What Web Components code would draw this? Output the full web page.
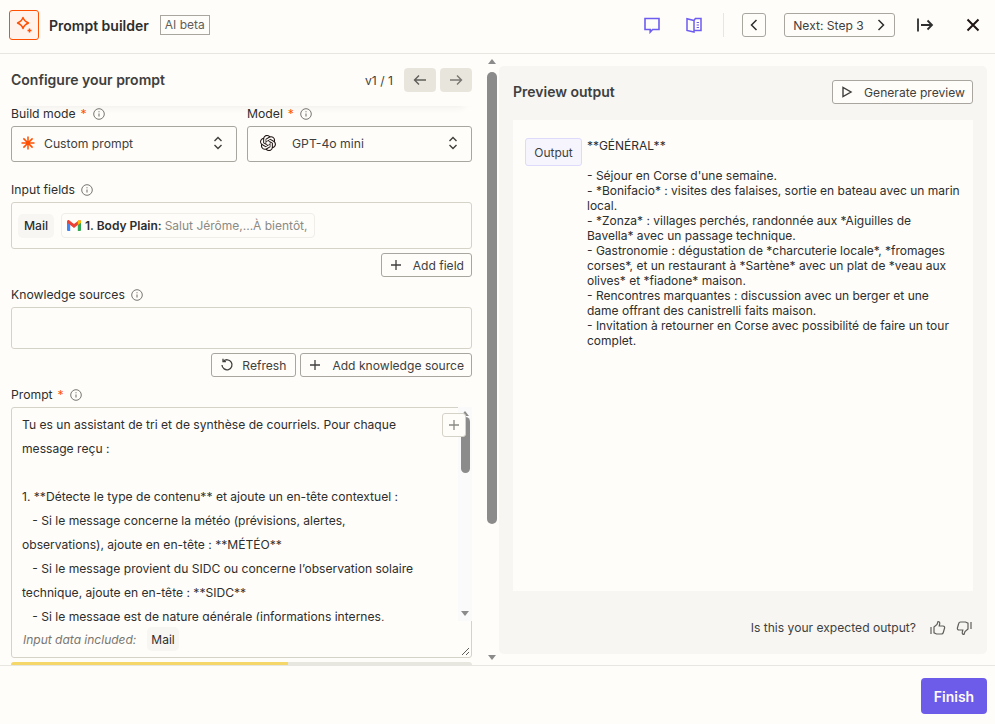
<!DOCTYPE html>
<html lang="en">
<head>
<meta charset="utf-8">
<title>Prompt builder</title>
<style>
  html, body { margin: 0; height: 100%; }
  body { background: #fffdf9; color: #2d2e2e; font-family: Inter, "Liberation Sans", sans-serif; font-size: 13px; overflow: hidden; }
</style>
</head>
<body>
<pb-app></pb-app>
<script>
const icons = {
  chat: `<svg width="18" height="18" viewBox="0 0 18 18" fill="none" stroke="#6d5cf0" stroke-width="1.6"><path d="M2 2.5h14v11H9.6l-2.4 2.6v-2.6H2z"/></svg>`,
  book: `<svg width="18" height="18" viewBox="0 0 18 18" fill="none" stroke="#6d5cf0" stroke-width="1.5"><path d="M9 4.500 2 2.800v11.600L9 16zM9 4.500l1.400-2H16v12H9"/><path d="M11.600 6.500h2.400M11.600 9h2.400M11.600 11.500h2.400" stroke-width="1.200"/></svg>`,
  left: `<svg width="12" height="14" viewBox="0 0 12 14" fill="none" stroke="#2d2e2e" stroke-width="1.5"><path d="M8.500 2 3.500 7l5 5"/></svg>`,
  right: `<svg width="12" height="14" viewBox="0 0 12 14" fill="none" stroke="#2d2e2e" stroke-width="1.5"><path d="M3.500 2l5 5-5 5"/></svg>`,
  exit: `<svg width="18" height="16" viewBox="0 0 18 16" fill="none" stroke="#2d2e2e" stroke-width="1.8"><path d="M2 1.500v13M5 8h11M11.500 3.500 16 8l-4.500 4.500"/></svg>`,
  close: `<svg width="14" height="14" viewBox="0 0 14 14" fill="none" stroke="#201515" stroke-width="2"><path d="M1.500 1.500l11 11M12.500 1.500l-11 11"/></svg>`,
  plus: `<svg width="12" height="12" viewBox="0 0 12 12" fill="none" stroke="#403f3e" stroke-width="1.300"><path d="M6 1v10M1 6h10"/></svg>`,
  play: `<svg width="12" height="12" viewBox="0 0 12 12" fill="none" stroke="#403f3e" stroke-width="1.400"><path d="M2 1.500v9l8-4.500z"/></svg>`,
  refresh: `<svg width="14" height="14" viewBox="0 0 14 14" fill="none" stroke="#403f3e" stroke-width="1.300" style="margin-right:-3px"><path d="M3.300 3.400A5 5 0 1 1 2 7"/><path d="M3 .8v2.900h2.900"/></svg>`,
  arrowLeft: `<svg width="14" height="12" viewBox="0 0 14 12" fill="none" stroke="#5f5e5a" stroke-width="1.400"><path d="M13 6H1.500M6 1.500 1.500 6 6 10.500"/></svg>`,
  arrowRight: `<svg width="14" height="12" viewBox="0 0 14 12" fill="none" stroke="#787671" stroke-width="1.400"><path d="M1 6h11.500M8 1.500 12.500 6 8 10.500"/></svg>`,
  updown: `<svg width="10" height="14" viewBox="0 0 10 14" fill="none" stroke="#403f3e" stroke-width="1.400"><path d="M1.500 5 5 1.500 8.500 5M1.500 9 5 12.500 8.500 9"/></svg>`,
  info: `<svg width="12" height="12" viewBox="0 0 12 12" fill="none" stroke="#787671" stroke-width="1"><circle cx="6" cy="6" r="5.300"/><path d="M6 5.500v3" stroke-width="1.100"/><path d="M6 3.200v1" stroke-width="1.100"/></svg>`,
  logo: `<svg width="18" height="18" viewBox="0 0 18 18" fill="none" stroke="#ff4f00" stroke-width="1.400"><path d="M8 1.500c.8 2.600 2.400 4.200 5.500 5.500-3.100 1.300-4.700 2.900-5.500 5.500C7.200 9.900 5.600 8.300 2.500 7 5.600 5.700 7.200 4.100 8 1.500z" stroke-linejoin="round"/><path d="M14.500 12.500v4M12.500 14.500h4" stroke-width="1.500"/></svg>`,
  star: `<svg width="14" height="14" viewBox="0 0 14 14" fill="none" stroke="#ff4f00" stroke-width="1.500"><path d="M7 .5v13M.5 7h13M2.400 2.400l9.200 9.200M11.600 2.400l-9.200 9.200"/></svg>`,
  openai: `<svg width="16" height="16" viewBox="0 0 24 24" fill="#201515"><path d="M22.2819 9.8211a5.9847 5.9847 0 0 0-.5157-4.9108 6.0462 6.0462 0 0 0-6.5098-2.9A6.0651 6.0651 0 0 0 4.9807 4.1818a5.9847 5.9847 0 0 0-3.9977 2.9 6.0462 6.0462 0 0 0 .7427 7.0966 5.98 5.98 0 0 0 .511 4.9107 6.051 6.051 0 0 0 6.5146 2.9001A5.9847 5.9847 0 0 0 13.2599 24a6.0557 6.0557 0 0 0 5.7718-4.2058 5.9894 5.9894 0 0 0 3.9977-2.9001 6.0557 6.0557 0 0 0-.7475-7.0729zm-9.022 12.6081a4.4755 4.4755 0 0 1-2.8764-1.0408l.1419-.0804 4.7783-2.7582a.7948.7948 0 0 0 .3927-.6813v-6.7369l2.02 1.1686a.071.071 0 0 1 .038.052v5.5826a4.504 4.504 0 0 1-4.4945 4.4944zm-9.6607-4.1254a4.4708 4.4708 0 0 1-.5346-3.0137l.142.0852 4.783 2.7582a.7712.7712 0 0 0 .7806 0l5.8428-3.3685v2.3324a.0804.0804 0 0 1-.0332.0615L9.74 19.9502a4.4992 4.4992 0 0 1-6.1408-1.6464zM2.3408 7.8956a4.485 4.485 0 0 1 2.3655-1.9728V11.6a.7664.7664 0 0 0 .3879.6765l5.8144 3.3543-2.0201 1.1685a.0757.0757 0 0 1-.071 0l-4.8303-2.7865A4.504 4.504 0 0 1 2.3408 7.872zm16.5963 3.8558L13.1038 8.364 15.1192 7.2a.0757.0757 0 0 1 .071 0l4.8303 2.7913a4.4944 4.4944 0 0 1-.6765 8.1042v-5.6772a.79.79 0 0 0-.407-.667zm2.0107-3.0231l-.142-.0852-4.7735-2.7818a.7759.7759 0 0 0-.7854 0L9.409 9.2297V6.8974a.0662.0662 0 0 1 .0284-.0615l4.8303-2.7866a4.4992 4.4992 0 0 1 6.6802 4.66zM8.3065 12.863l-2.02-1.1638a.0804.0804 0 0 1-.038-.0567V6.0742a4.4992 4.4992 0 0 1 7.3757-3.4537l-.142.0805L8.704 5.459a.7948.7948 0 0 0-.3927.6813zm1.0976-2.3654l2.602-1.4998 2.6069 1.4998v2.9994l-2.5974 1.4997-2.6067-1.4997Z"/></svg>`,
  gmail: `<svg width="14" height="11" viewBox="0 0 14 11"><path fill="#4285f4" d="M0 2v8a1 1 0 0 0 1 1h2.200V4.600z"/><path fill="#34a853" d="M14 2v8a1 1 0 0 1-1 1h-2.200V4.600z"/><path fill="#ea4335" d="M0 1.700C0 .4 1.400-.4 2.400.4L7 3.900 11.600.4c1-.8 2.400 0 2.400 1.300v1L10.800 5 7 7.900 3.200 5 0 2.700z"/><path fill="#fbbc04" d="M10.800 1v4L14 2.700v-1C14 .4 12.600-.4 11.600.4z"/></svg>`,
  up: `<svg width="16" height="16" viewBox="0 0 16 16" fill="none" stroke="#5f5e5a" stroke-width="1.200"><path d="M1 7v7"/><path d="M4 7l3-2.500L8 1.500c1.300 0 2 1 1.700 2.300L9.200 6H13c1.200 0 1.900 1 1.600 2l-1.300 4.500c-.2.900-1 1.500-1.900 1.500H6.500L4 12.800z"/></svg>`,
  down: `<svg width="16" height="16" viewBox="0 0 16 16" fill="none" stroke="#5f5e5a" stroke-width="1.200"><path d="M15 9V2"/><path d="M12 9l-3 2.500-1 3c-1.300 0-2-1-1.700-2.300L6.800 10H3c-1.200 0-1.900-1-1.600-2l1.300-4.500C2.900 2.600 3.700 2 4.600 2h4.900L12 3.200z"/></svg>`
};

// plain outlined button, icon goes in through the attribute
class PbButton extends HTMLElement {
  constructor() {
    super();
    const icon = icons[this.getAttribute("icon")] || "";
    this.attachShadow({ mode: "open" }).innerHTML = `
<style>
  :host { display: inline-flex; align-items: center; justify-content: center; box-sizing: border-box; height: 24px; gap: 11px; padding: 0 7px 0 8px; border: 1px solid #a8a69f; border-radius: 3px; font-size: 12.100px; color: #403f3e; background: #fffdf9; white-space: nowrap; }
  svg { display: block; }
</style>${icon}<slot></slot>`;
  }
}

class PbIconButton extends HTMLElement {
  constructor() {
    super();
    this.attachShadow({ mode: "open" }).innerHTML = `
<style>
  :host { display: flex; align-items: center; justify-content: center; width: 24px; height: 24px; flex: none; }
  svg { display: block; }
</style>${icons[this.getAttribute("icon")]}`;
  }
}

class PbHeader extends HTMLElement {
  constructor() {
    super();
    this.attachShadow({ mode: "open" }).innerHTML = `
<style>
  :host { display: flex; align-items: center; box-sizing: border-box; height: 54px; flex: none; border-bottom: 1px solid #e8e6e0; padding: 0 10px 3px 9px; }
  .logo { width: 28px; height: 28px; border: 1px solid #ff4f00; border-radius: 3px; background: #fff3ec; display: flex; align-items: center; justify-content: center; margin-right: 10px; }
  .title { font-size: 14px; font-weight: 600; color: #2d2e2e; margin-right: 11px; }
  .beta { border: 1px solid #a8a69f; font-size: 12px; line-height: 18px; padding: 0 4px; color: #5f5e5a; }
  .space { flex: 1; }
  .sep { width: 1px; height: 24px; background: #e8e6e0; margin: 0 18px 0 17px; }
  pb-icon-button + pb-icon-button { margin-left: 18px; }
  .prev { width: 24px; padding: 0; gap: 0; }
  .next { width: 111px; margin-left: 18px; gap: 11px; }
  .next svg { display: block; }
  .exit { margin-left: 18px; }
  .close { margin-left: 24px; }
</style>
<div class="logo">${icons.logo}</div>
<div class="title">Prompt builder</div>
<div class="beta">AI beta</div>
<div class="space"></div>
<pb-icon-button icon="chat"></pb-icon-button>
<pb-icon-button icon="book"></pb-icon-button>
<div class="sep"></div>
<pb-button class="prev" icon="left"></pb-button>
<pb-button class="next">Next: Step 3 ${icons.right}</pb-button>
<pb-icon-button class="exit" icon="exit"></pb-icon-button>
<pb-icon-button class="close" icon="close"></pb-icon-button>`;
  }
}

class PbLabel extends HTMLElement {
  constructor() {
    super();
    const req = this.hasAttribute("required") ? `<span class="req">*</span>` : "";
    this.attachShadow({ mode: "open" }).innerHTML = `
<style>
  :host { display: flex; align-items: center; flex: none; height: 15px; margin-bottom: 5px; gap: 5px; font-size: 12.200px; color: #2d2e2e; }
  .req { color: #ff4f00; }
  svg { display: block; margin-left: 1px; }
</style><slot></slot>${req}${icons.info}`;
  }
}

class PbSelect extends HTMLElement {
  constructor() {
    super();
    this.attachShadow({ mode: "open" }).innerHTML = `
<style>
  :host { display: flex; align-items: center; box-sizing: border-box; height: 36px; border: 1px solid #a8a69f; border-radius: 3px; padding: 0 13px 2px 9px; font-size: 12.200px; color: #403f3e; }
  .icon { width: 23px; flex: none; display: flex; margin-right: var(--icon-gap, 0); }
  .label { flex: 1; }
  svg { display: block; }
</style>
<div class="icon">${icons[this.getAttribute("icon")]}</div>
<div class="label"><slot></slot></div>
${icons.updown}`;
  }
}

class PbChip extends HTMLElement {
  constructor() {
    super();
    this.attachShadow({ mode: "open" }).innerHTML = `
<style>
  :host { display: inline-flex; align-items: center; box-sizing: border-box; height: 24px; padding: 0 5px; border-radius: 5px; background: #f7f6f3; color: #2d2e2e; font-size: 12.200px; }
</style><slot></slot>`;
  }
}

class PbScrollbar extends HTMLElement {
  constructor() {
    super();
    const w = this.getAttribute("size") || 10;
    this.attachShadow({ mode: "open" }).innerHTML = `
<style>
  :host { display: flex; flex-direction: column; align-items: center; box-sizing: border-box; }
  .thumb { width: ${w}px; background: #8b8b8b; border-radius: var(--thumb-radius, 0); flex: none; height: var(--thumb-height, 100px); margin-top: var(--thumb-top, 0); }
  .space { flex: 1; }
  svg { display: block; flex: none; }
</style>
<svg width="10" height="7" viewBox="0 0 10 7"><path fill="#8b8b8b" d="M1 6l4-5 4 5z"/></svg>
<div class="thumb"></div>
<div class="space"></div>
<svg width="10" height="7" viewBox="0 0 10 7"><path fill="#8b8b8b" d="M1 1l4 5 4-5z"/></svg>`;
  }
}

class PbPrompt extends HTMLElement {
  constructor() {
    super();
    this.attachShadow({ mode: "open" }).innerHTML = `
<style>
  :host { display: flex; flex-direction: column; position: relative; box-sizing: border-box; height: 251px; flex: none; border: 1px solid #d5d2c8; border-radius: 3px; }
  .text { height: 213px; flex: none; overflow: hidden; padding: 5px 30px 0 10px; font-size: 12.100px; line-height: 24px; white-space: pre-wrap; color: #2d2e2e; box-sizing: border-box; }
  .data { flex: 1; display: flex; align-items: center; gap: 11px; padding: 0 11px; font-size: 12px; font-style: italic; color: #787671; }
  .data pb-chip { font-style: normal; padding: 0 4px; font-size: 12px; }
  .add { position: absolute; top: 5px; right: 5px; width: 24px; height: 24px; box-sizing: border-box; border: 1px solid #d5d2c8; border-radius: 3px; background: #fffdf9; display: flex; align-items: center; justify-content: center; z-index: 2; }
  .add svg { display: block; stroke: #8b8a84; }
  pb-scrollbar { position: absolute; top: -1px; right: -1px; width: 14px; height: 214px; padding: 3px 0 4px; background: #fafafb; --thumb-height: 56px; --thumb-radius: 5px; z-index: 1; }
  .grip { position: absolute; right: 1px; bottom: 1px; display: block; }
</style>
<div class="text"><slot></slot></div>
<div class="data">Input data included: <pb-chip>Mail</pb-chip></div>
<pb-scrollbar size="9"></pb-scrollbar>
<div class="add">${icons.plus}</div>
<svg class="grip" width="9" height="9" viewBox="0 0 9 9" fill="none" stroke="#5f5e5a"><path d="M1 8 8 1M5 8l3-3"/></svg>`;
  }
}

class PbConfig extends HTMLElement {
  constructor() {
    super();
    this.attachShadow({ mode: "open" }).innerHTML = `
<style>
  :host { display: flex; flex-direction: column; box-sizing: border-box; width: 485px; flex: none; height: 100%; overflow: hidden; padding: 0 13px 0 11px; }
  .top { flex: none; display: flex; align-items: center; height: 52px; box-sizing: border-box; padding: 14px 0; box-shadow: 0 8px 8px -8px rgba(45,46,46,.09); }
  h2 { margin: 0 0 1px; flex: 1; font-size: 14px; font-weight: 600; color: #403f3e; }
  .ver { font-size: 12.200px; color: #403f3e; margin-right: 11px; }
  .nav { width: 32px; height: 24px; border-radius: 4px; background: #e8e6dc; display: flex; align-items: center; justify-content: center; }
  .nav + .nav { margin-left: 4px; }
  .nav svg { display: block; }
  .pair { flex: none; display: grid; grid-template-columns: 226px 225px; gap: 10px; margin-bottom: 20px; }
  .box { flex: none; box-sizing: border-box; border: 1px solid #d5d2c8; border-radius: 3px; }
  .fields { height: 47px; display: flex; align-items: center; gap: 7px; padding: 0 6px; }
  .knowledge { height: 42px; }
  .actions { flex: none; display: flex; justify-content: flex-end; gap: 4px; margin: 4px 0 10px; }
  .refresh { padding-right: 9px; }
  .body { display: flex; align-items: center; gap: 3px; box-sizing: border-box; height: 25px; width: 254px; border: 1px solid #f0eee8; border-radius: 4px; padding: 0 4px; font-size: 12px; white-space: nowrap; overflow: hidden; }
  .body svg { display: block; flex: none; margin: 0 1px; }
  .body b { font-weight: 600; color: #2d2e2e; }
  .body span { color: #8b8a84; }
  .mail { font-weight: 500; width: 36px; justify-content: center; padding: 0; box-sizing: border-box; }
  .progress { flex: none; height: 10px; margin-top: 4px; border-radius: 3px 3px 0 0; background: #e8e7df; overflow: hidden; }
  .progress div { width: 277px; height: 100%; background: #f4d768; }
</style>
<div class="top">
  <h2>Configure your prompt</h2>
  <div class="ver">v1 / 1</div>
  <div class="nav">${icons.arrowLeft}</div>
  <div class="nav">${icons.arrowRight}</div>
</div>
<div class="pair">
  <div>
    <pb-label required>Build mode</pb-label>
    <pb-select icon="star">Custom prompt</pb-select>
  </div>
  <div>
    <pb-label required>Model</pb-label>
    <pb-select icon="openai" style="--icon-gap:9px;padding-left:12px">GPT-4o mini</pb-select>
  </div>
</div>
<pb-label>Input fields</pb-label>
<div class="box fields">
  <pb-chip class="mail">Mail</pb-chip>
  <div class="body">${icons.gmail}<b>1. Body Plain:</b><span>Salut Jérôme,...À bientôt,</span></div>
</div>
<div class="actions"><pb-button icon="plus">Add field</pb-button></div>
<pb-label>Knowledge sources</pb-label>
<div class="box knowledge"></div>
<div class="actions">
  <pb-button class="refresh" icon="refresh">Refresh</pb-button>
  <pb-button icon="plus">Add knowledge source</pb-button>
</div>
<pb-label required>Prompt</pb-label>
<pb-prompt>Tu es un assistant de tri et de synthèse de courriels. Pour chaque
message reçu :

1. **Détecte le type de contenu** et ajoute un en-tête contextuel :
   - Si le message concerne la météo (prévisions, alertes,
observations), ajoute en en-tête : **MÉTÉO**
   - Si le message provient du SIDC ou concerne l’observation solaire
technique, ajoute en en-tête : **SIDC**
   - Si le message est de nature générale (informations internes,</pb-prompt>
<div class="progress"><div></div></div>`;
  }
}

class PbPreview extends HTMLElement {
  constructor() {
    super();
    this.attachShadow({ mode: "open" }).innerHTML = `
<style>
  :host { flex: 1; display: flex; flex-direction: column; box-sizing: border-box; background: #f7f6f3; border-radius: 5px; padding: 14px 14px 0; min-width: 0; }
  .head { display: flex; align-items: center; justify-content: space-between; height: 24px; margin-bottom: 16px; flex: none; }
  h2 { margin: 0 0 1px; font-size: 14px; font-weight: 600; color: #403f3e; }
  .card { flex: 1; background: #fffdf9; display: flex; align-items: flex-start; padding: 18px 12px; min-height: 0; }
  .tag { flex: none; box-sizing: border-box; width: 57px; height: 28px; display: flex; align-items: center; justify-content: center; background: #f6f5fe; border: 1px solid #dedafc; border-radius: 3px; font-size: 12px; color: #403f3e; margin-right: 5px; }
  .out { width: 373px; font-size: 12px; line-height: 15px; white-space: pre-wrap; color: #2d2e2e; }
  .foot { display: flex; align-items: center; justify-content: flex-end; gap: 14px; height: 63px; box-sizing: border-box; padding: 10px 1px 0 0; flex: none; font-size: 12.100px; color: #403f3e; }
  .foot svg { display: block; }
  .foot svg + svg { margin-left: -4px; }
</style>
<div class="head"><h2>Preview output</h2><pb-button icon="play">Generate preview</pb-button></div>
<div class="card">
  <div class="tag">Output</div>
  <div class="out"><slot></slot></div>
</div>
<div class="foot"><span>Is this your expected output?</span>${icons.up}${icons.down}</div>`;
  }
}

class PbFooter extends HTMLElement {
  constructor() {
    super();
    this.attachShadow({ mode: "open" }).innerHTML = `
<style>
  :host { display: flex; align-items: flex-start; justify-content: flex-end; box-sizing: border-box; height: 59px; flex: none; border-top: 1px solid #e8e6e0; padding: 12px 8px 0 0; background: #fffdf9; }
  .finish { width: 66px; height: 36px; border-radius: 4px; background: #6d5cea; color: #fffdf9; font-weight: 600; font-size: 14px; display: flex; align-items: center; justify-content: center; }
</style><div class="finish">Finish</div>`;
  }
}

class PbApp extends HTMLElement {
  constructor() {
    super();
    this.attachShadow({ mode: "open" }).innerHTML = `
<style>
  :host { display: flex; flex-direction: column; height: 724px; overflow: hidden; }
  main { flex: 1; display: flex; min-height: 0; }
  .bar { width: 14px; flex: none; padding: 4px 0 4px; --thumb-height: 452px; --thumb-top: 7px; --thumb-radius: 5px; }
  .right { flex: 1; display: flex; padding: 12px 8px 11px 0; min-width: 0; box-sizing: border-box; }
</style>
<pb-header></pb-header>
<main>
  <pb-config></pb-config>
  <pb-scrollbar class="bar"></pb-scrollbar>
  <div class="right"><pb-preview>**GÉNÉRAL**

- Séjour en Corse d'une semaine.
- *Bonifacio* : visites des falaises, sortie en bateau avec un marin local.
- *Zonza* : villages perchés, randonnée aux *Aiguilles de Bavella* avec un passage technique.
- Gastronomie : dégustation de *charcuterie locale*, *fromages corses*, et un restaurant à *Sartène* avec un plat de *veau aux olives* et *fiadone* maison.
- Rencontres marquantes : discussion avec un berger et une dame offrant des canistrelli faits maison.
- Invitation à retourner en Corse avec possibilité de faire un tour complet.</pb-preview></div>
</main>
<pb-footer></pb-footer>`;
  }
}

customElements.define("pb-button", PbButton);
customElements.define("pb-icon-button", PbIconButton);
customElements.define("pb-header", PbHeader);
customElements.define("pb-label", PbLabel);
customElements.define("pb-select", PbSelect);
customElements.define("pb-chip", PbChip);
customElements.define("pb-scrollbar", PbScrollbar);
customElements.define("pb-prompt", PbPrompt);
customElements.define("pb-config", PbConfig);
customElements.define("pb-preview", PbPreview);
customElements.define("pb-footer", PbFooter);
customElements.define("pb-app", PbApp);
</script>
</body>
</html>
